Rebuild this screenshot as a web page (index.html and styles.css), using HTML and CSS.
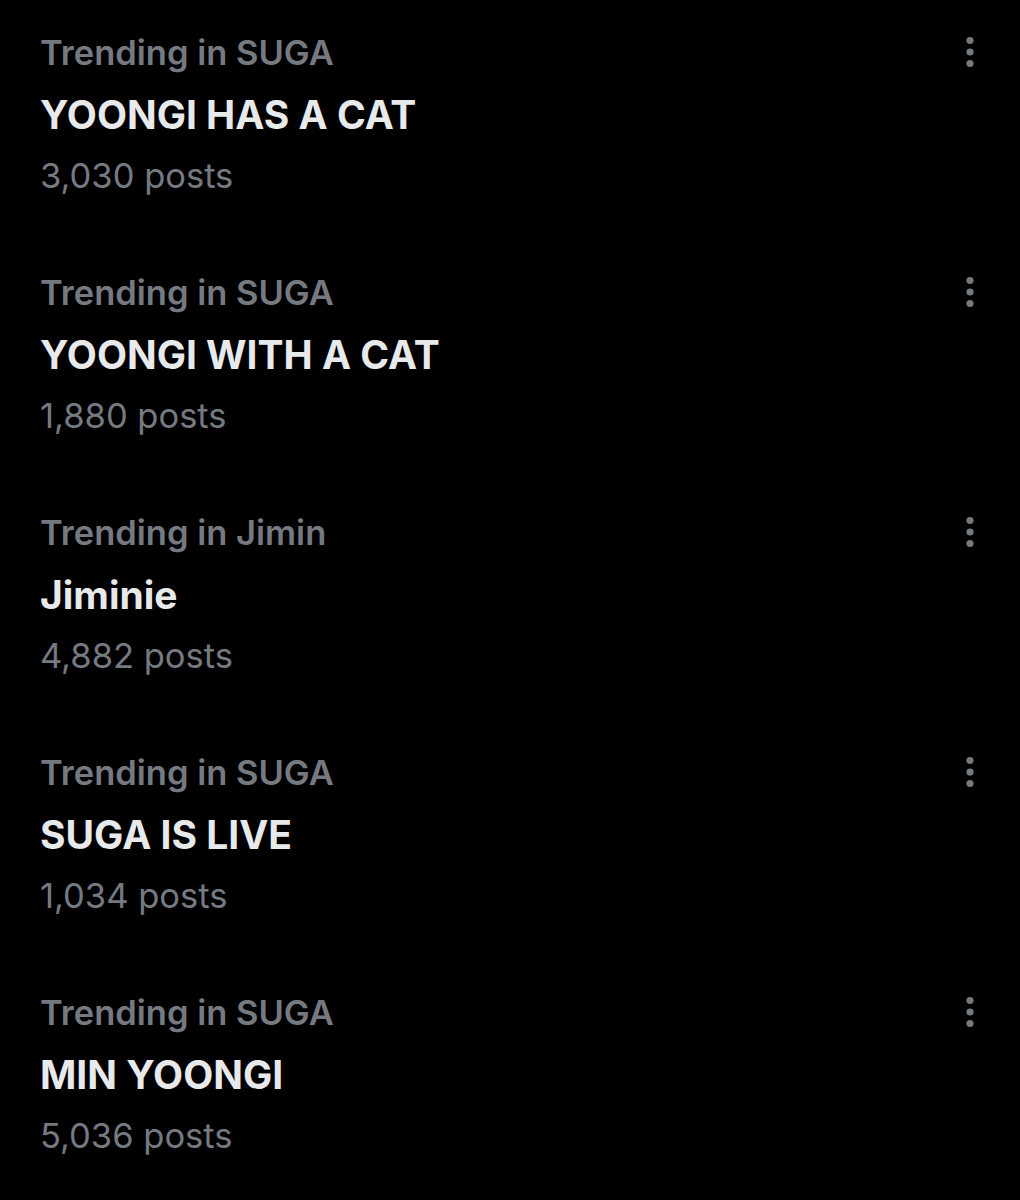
FILE: index.html
```html
<!DOCTYPE html>
<html>
<head>
<meta charset="utf-8">
<link rel="stylesheet" href="styles.css">
</head>
<body>
<div class="list">
  <div class="trend">
    <div class="text">
      <div class="cat">Trending in SUGA</div>
      <div class="title">YOONGI HAS A CAT</div>
      <div class="count">3,030 posts</div>
    </div>
    <svg class="more" width="10" height="32" viewBox="0 0 10 32"><circle cx="5" cy="4.5" r="3.6"/><circle cx="5" cy="16" r="3.6"/><circle cx="5" cy="27.5" r="3.6"/></svg>
  </div>
  <div class="trend">
    <div class="text">
      <div class="cat">Trending in SUGA</div>
      <div class="title">YOONGI WITH A CAT</div>
      <div class="count">1,880 posts</div>
    </div>
    <svg class="more" width="10" height="32" viewBox="0 0 10 32"><circle cx="5" cy="4.5" r="3.6"/><circle cx="5" cy="16" r="3.6"/><circle cx="5" cy="27.5" r="3.6"/></svg>
  </div>
  <div class="trend">
    <div class="text">
      <div class="cat">Trending in Jimin</div>
      <div class="title">Jiminie</div>
      <div class="count">4,882 posts</div>
    </div>
    <svg class="more" width="10" height="32" viewBox="0 0 10 32"><circle cx="5" cy="4.5" r="3.6"/><circle cx="5" cy="16" r="3.6"/><circle cx="5" cy="27.5" r="3.6"/></svg>
  </div>
  <div class="trend">
    <div class="text">
      <div class="cat">Trending in SUGA</div>
      <div class="title">SUGA IS LIVE</div>
      <div class="count">1,034 posts</div>
    </div>
    <svg class="more" width="10" height="32" viewBox="0 0 10 32"><circle cx="5" cy="4.5" r="3.6"/><circle cx="5" cy="16" r="3.6"/><circle cx="5" cy="27.5" r="3.6"/></svg>
  </div>
  <div class="trend">
    <div class="text">
      <div class="cat">Trending in SUGA</div>
      <div class="title">MIN YOONGI</div>
      <div class="count">5,036 posts</div>
    </div>
    <svg class="more" width="10" height="32" viewBox="0 0 10 32"><circle cx="5" cy="4.5" r="3.6"/><circle cx="5" cy="16" r="3.6"/><circle cx="5" cy="27.5" r="3.6"/></svg>
  </div>
</div>
</body>
</html>
```
FILE: styles.css
```css
html, body {
  margin: 0;
  padding: 0;
  background: #000;
}
body {
  width: 1020px;
  height: 1200px;
  overflow: hidden;
  font-family: Inter, "Liberation Sans", sans-serif;
}
.list {
  padding-top: 23px;
  padding-left: 40px;
  padding-right: 45px;
}
.trend {
  display: flex;
  justify-content: space-between;
  align-items: flex-start;
  padding-bottom: 60px;
}
.text {
  display: flex;
  flex-direction: column;
}
.cat {
  height: 60px;
  line-height: 60px;
  font-size: 34.5px;
  font-weight: 600;
  color: #757a80;
}
.title {
  height: 60px;
  line-height: 64px;
  font-size: 39px;
  font-weight: 700;
  color: #e7e9ea;
}
.count {
  height: 60px;
  line-height: 66px;
  font-size: 34.5px;
  font-weight: 400;
  color: #757a80;
}
.more {
  margin-top: 13px;
  fill: #757a80;
}
```
